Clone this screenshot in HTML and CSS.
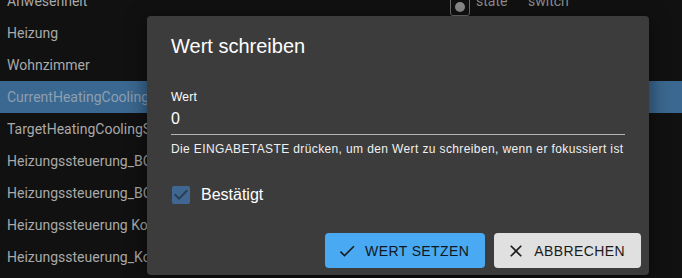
FILE: index.html
```html
<!DOCTYPE html>
<html>
<head lang="de">
    <meta charset="UTF-8">
    <title>Wert schreiben</title>
    <link rel="stylesheet" href="styles.css">
</head>
<body>

<div class="obj-list">
    <div class="obj-row">
        <span class="obj-name">Anwesenheit</span>
        <span class="obj-icon"><span class="obj-dot"></span></span>
        <span class="obj-role">state</span>
        <span class="obj-func">switch</span>
    </div>
    <div class="obj-row"><span class="obj-name">Heizung</span></div>
    <div class="obj-row"><span class="obj-name">Wohnzimmer</span></div>
    <div class="obj-row obj-selected"><span class="obj-name">CurrentHeatingCoolingState</span></div>
    <div class="obj-row"><span class="obj-name">TargetHeatingCoolingState</span></div>
    <div class="obj-row"><span class="obj-name">Heizungssteuerung_BOOST</span></div>
    <div class="obj-row"><span class="obj-name">Heizungssteuerung_BOOST_TIME</span></div>
    <div class="obj-row"><span class="obj-name">Heizungssteuerung Komfort</span></div>
    <div class="obj-row"><span class="obj-name">Heizungssteuerung_Komfort_Temp</span></div>
</div>

<div class="dialog">
    <div class="dialog-title">Wert schreiben</div>

    <div class="dialog-content">
        <div class="field-label">Wert</div>
        <div class="field-input">0</div>
        <div class="field-help">Die EINGABETASTE drücken, um den Wert zu schreiben, wenn er fokussiert ist</div>

        <label class="check-row">
            <svg class="check-box" viewBox="0 0 24 24" width="24" height="24">
                <rect x="3" y="3" width="18" height="18" rx="2" fill="#3f6792"/>
                <path d="M10 17l-5-5 1.41-1.41L10 14.17l7.59-7.59L19 8l-9 9z" fill="#2b3e52"/>
            </svg>
            <span>Bestätigt</span>
        </label>
    </div>

    <div class="dialog-actions">
        <a href="javascript:void(0);" class="btn btn-primary">
            <svg viewBox="0 0 24 24" width="20" height="20"><path d="M9 16.17L4.83 12l-1.42 1.41L9 19 21 7l-1.41-1.41z"/></svg>
            WERT SETZEN
        </a>
        <a href="javascript:void(0);" class="btn btn-grey">
            <svg viewBox="0 0 24 24" width="20" height="20"><path d="M19 6.41L17.59 5 12 10.59 6.41 5 5 6.41 10.59 12 5 17.59 6.41 19 12 13.41 17.59 19 19 17.59 13.41 12z"/></svg>
            ABBRECHEN
        </a>
    </div>
</div>

</body>
</html>
```

FILE: styles.css
```css
html, body, div, span, a, label {
    padding: 0px;
    margin: 0px;
}

body {
    background: #111111;
    width: 682px;
    height: 278px;
    overflow: hidden;
    position: relative;
    font-family: "Roboto", "Liberation Sans", sans-serif;
}

a {
    text-decoration: none;
    color: #000000;
}

/* Objektliste im Hintergrund */
.obj-list {
    margin-top: -15px;
}

.obj-row {
    display: flex;
    align-items: center;
    height: 32px;
    padding-left: 7px;
    font-size: 14px;
    color: #a9a9a9;
    white-space: nowrap;
}

.obj-name {
    width: 443px;
    flex-shrink: 0;
    overflow: hidden;
}

.obj-selected {
    background: #3b6890;
    color: #8d9fb0;
}

.obj-icon {
    box-sizing: border-box;
    flex-shrink: 0;
    width: 20px;
    height: 30px;
    padding-top: 11px;
    border: #6a6a6a solid 1px;
    border-radius: 3px;
    display: flex;
    justify-content: center;
    align-items: center;
}

.obj-dot {
    width: 10px;
    height: 10px;
    border-radius: 5px;
    background: #8a8a8a;
}

.obj-role {
    margin-left: 6px;
    width: 52px;
    flex-shrink: 0;
    color: #8c8c8c;
}

.obj-func {
    color: #8c8c8c;
}

/* Dialog */
.dialog {
    position: absolute;
    left: 147px;
    top: 16px;
    width: 502px;
    height: 259px;
    background: #3c3c3c;
    border-radius: 4px;
    box-shadow: 0px 4px 20px rgba(0, 0, 0, 0.5);
    display: flex;
    flex-direction: column;
    font-family: "Liberation Sans", Arial, sans-serif;
    color: #ffffff;
}

.dialog-title {
    padding: 18px 24px 0px 24px;
    font-size: 20px;
    line-height: 24px;
}

.dialog-content {
    padding: 0px 24px;
}

.field-label {
    margin-top: 31px;
    font-size: 12px;
    line-height: 16px;
    letter-spacing: 0.2px;
}

.field-input {
    padding: 4px 0px 5px 0px;
    font-size: 16px;
    line-height: 20px;
    border-bottom: #b5b5b5 solid 1px;
}

.field-help {
    margin-top: 6px;
    font-size: 12px;
    line-height: 16px;
    letter-spacing: 0.38px;
    color: #f0f0f0;
}

.check-row {
    display: flex;
    align-items: center;
    margin-top: 26px;
    margin-left: -2px;
    font-size: 16px;
    line-height: 24px;
}

.check-box {
    margin-right: 8px;
}

.dialog-actions {
    margin-top: auto;
    padding: 0px 8px 7px 8px;
    display: flex;
    justify-content: flex-end;
    gap: 9px;
}

.btn {
    display: flex;
    align-items: center;
    height: 35px;
    padding: 0px 16px 0px 12px;
    border-radius: 4px;
    font-size: 14px;
    letter-spacing: 0.4px;
    color: #1b1b1b;
}

.btn svg {
    margin-right: 8px;
    fill: #1b1b1b;
}

.btn-primary {
    background: #4aa9f3;
    color: #0e1822;
}

.btn-grey {
    background: #e0e0e0;
}
```
